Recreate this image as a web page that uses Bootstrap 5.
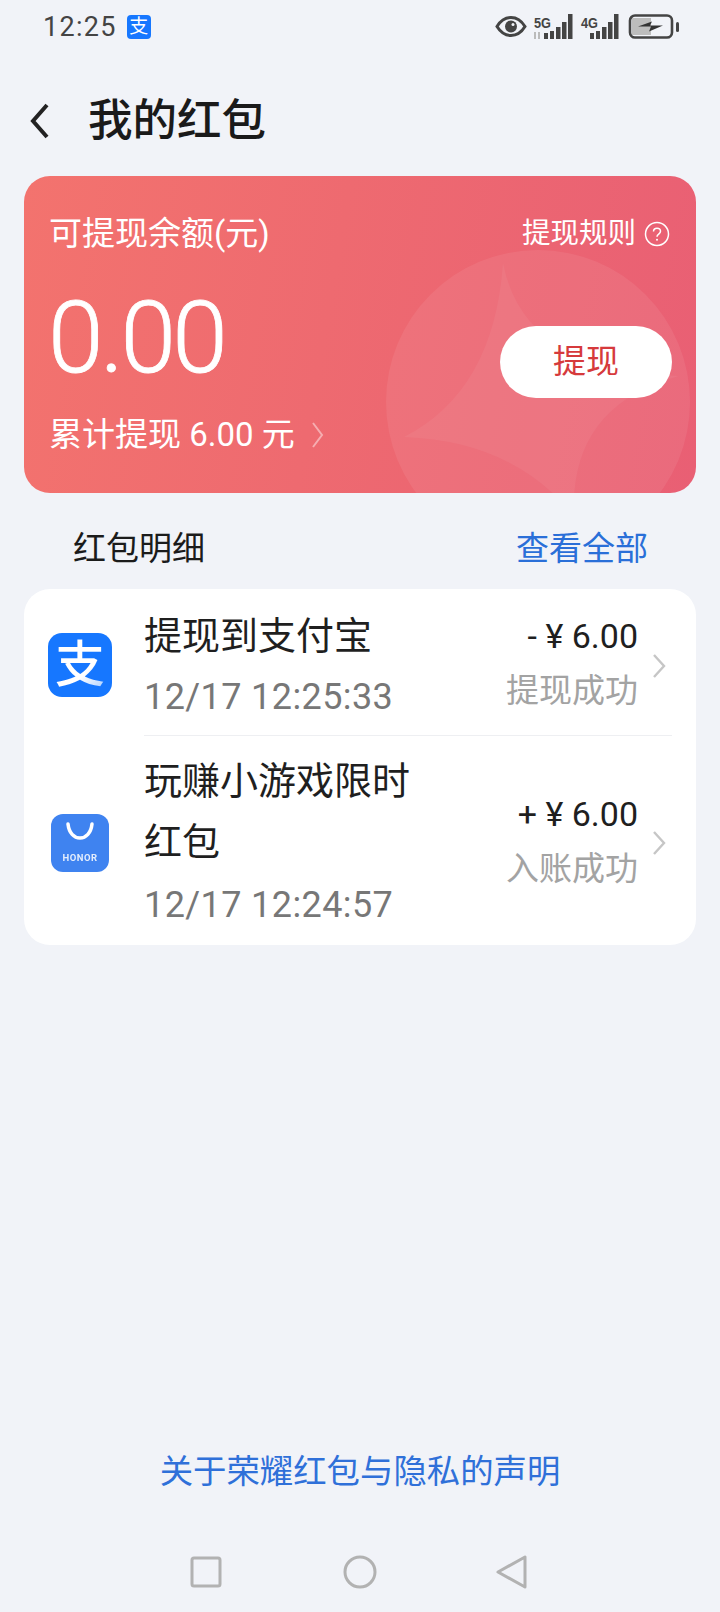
<!doctype html>
<html lang="zh-CN">
  <head>
    <meta charset="utf-8">
    <meta name="viewport" content="width=device-width, initial-scale=1">
    <title>我的红包</title>
    <link href="https://cdn.jsdelivr.net/npm/bootstrap@5.3.3/dist/css/bootstrap.min.css" rel="stylesheet">
    <style>
      html, body { height: 100%; margin: 0; }
      body {
        background: #f1f3f8;
        color: #1b1b1b;
        font-family: Roboto, "Noto Sans CJK SC", sans-serif;
      }
      .screen { width: 720px; height: 1612px; overflow: hidden; }

      .status-bar { height: 54px; padding: 3px 33px 0 43px; }
      .status-time { font-size: 27px; letter-spacing: 1.3px; color: #444; line-height: 54px; margin-top: -3px; }
      .status-app {
        width: 24px; height: 24px; margin-left: 10px; margin-top: -3px; border-radius: 4px;
        background: #1677ff; color: #fff; font-size: 19px; line-height: 24px; text-align: center;
      }

      .title-bar { height: 122px; padding: 12px 0 0 30px; }
      .title-text { font-size: 44.500px; font-weight: 500; margin-left: 38px; line-height: 1; color: #1a1a1a; }

      .balance-box {
        height: 317px; margin: 0 24px; border-radius: 26px; color: #fff;
        background: linear-gradient(100deg, #f3736e 0%, #ee6a70 45%, #e95f74 100%);
        padding: 36px 24px 0 25px;
      }
      .balance-deco { position: absolute; left: 0; top: 0; }
      .balance-top, .balance-mid, .balance-sum { position: relative; }
      .balance-label { font-size: 33px; line-height: 44px; }
      .balance-rule { font-size: 28.500px; line-height: 44px; margin-right: 2px; }
      .balance-num { font-family: Roboto, sans-serif; font-weight: 300; -webkit-text-stroke: .8px #fff; font-size: 100px; line-height: 100px; letter-spacing: -3.500px; margin-left: -1px; }
      .balance-mid { margin-top: 32px; }
      .withdraw-btn {
        width: 172px; height: 72px; margin-top: 38px; background: #fff; border: 0; border-radius: 36px;
        color: #d63a3c; font-size: 33px; line-height: 72px; padding: 0; text-align: center;
      }
      .balance-sum { font-size: 33px; line-height: 44px; margin-top: 15px; }

      .detail-head { height: 96px; padding: 16px 72px 0 73px; font-size: 33px; }
      .see-all { color: #2a6fd8; }

      .record-list { margin: 0 24px; background: #fff; border-radius: 26px; padding: 0 24px; }
      .record-row { margin-left: 96px; position: relative; }
      .record-row + .record-row { border-top: 1px solid #eeeff2; }
      .row-one { height: 146px; padding-top: 17px; }
      .row-two { height: 210px; padding-top: 15px; }
      .record-icon { position: absolute; transform: translateY(-50%); }
      .icon-alipay {
        top: calc(50% + 3px); left: -96px; width: 64px; height: 64px; border-radius: 14px; background: #1677ff;
        font-size: 50px; font-weight: 500; line-height: 64px; text-align: center;
      }
      .alipay-char {
        background: linear-gradient(135deg, #fff 62%, #b5d4ff 90%);
        -webkit-background-clip: text; background-clip: text; color: transparent;
      }
      .icon-honor { top: calc(50% + 2px); left: -93px; width: 58px; height: 58px; border-radius: 12px; background: #3f83f0; color: #fff; text-align: center; }
      .honor-word { font-family: Roboto, sans-serif; font-weight: 700; font-size: 9.500px; letter-spacing: .5px; line-height: 10px; display: block; margin-top: 11px; opacity: .85; }
      .record-name { width: 280px; font-size: 38px; line-height: 61px; color: #1f1f1f; }
      .record-time { font-size: 36px; line-height: 60px; letter-spacing: .4px; color: #777; }
      .row-two .record-time { margin-top: 2px; }
      .record-side { position: absolute; right: 34px; text-align: right; }
      .side-money { font-size: 34px; line-height: 44px; color: #1f1f1f; }
      .side-state { font-size: 33px; line-height: 44px; margin-top: 11px; color: #a3a3a3; }
      .record-arrow { position: absolute; right: 6px; }
      .row-one .record-side { top: 25px; }
      .row-one .record-arrow { top: 64px; }
      .row-two .record-side { top: 56px; }
      .row-two .record-arrow { top: 94px; }

      .privacy-link { margin-top: auto; font-size: 33.400px; line-height: 44px; color: #2f70d9; }
      .nav-keys { height: 118px; padding-top: 61px; }
    </style>
  </head>
  <body>
    <div class="screen d-flex flex-column">
      <div class="status-bar d-flex align-items-center justify-content-between">
        <div class="d-flex align-items-center">
          <span class="status-time">12:25</span>
          <span class="status-app">支</span>
        </div>
        <svg width="192" height="30" viewBox="0 0 192 30">
          <path d="M2 12.500c4-6.500 9-9 14-9s10 2.500 14 9c-4 6.500-9 9-14 9s-10-2.500-14-9z" fill="none" stroke="#444" stroke-width="3"/>
          <circle cx="16" cy="12.500" r="6" fill="#444"/>
          <circle cx="18" cy="10.500" r="1.500" fill="#f1f3f8"/>
          <text x="39" y="14" font-family="Liberation Sans" font-weight="700" font-size="15" textLength="17" lengthAdjust="spacingAndGlyphs" fill="#444">5G</text>
          <path d="M40 18v7M44 18v7" stroke="#bbb" stroke-width="2"/>
          <g fill="#444">
            <rect x="49" y="19" width="4" height="6"/><rect x="55" y="17" width="4" height="8"/><rect x="61" y="13" width="4.500" height="12"/><rect x="67" y="8" width="4.500" height="17"/><rect x="73" y="0" width="4.500" height="25"/>
          </g>
          <text x="86" y="14" font-family="Liberation Sans" font-weight="700" font-size="15" textLength="17" lengthAdjust="spacingAndGlyphs" fill="#444">4G</text>
          <g fill="#444">
            <rect x="95" y="19" width="4" height="6"/><rect x="101" y="17" width="4" height="8"/><rect x="107" y="13" width="4.500" height="12"/><rect x="113" y="8" width="4.500" height="17"/><rect x="119" y="0" width="4.500" height="25"/>
          </g>
          <rect x="135" y="1.500" width="42" height="22" rx="5" fill="#f1f3f8" stroke="#444" stroke-width="2.600"/>
          <path d="M137 4h19v17h-19z" fill="#bdbdbd"/>
          <path d="M143 12.500l14-5-2 4h13l-14 6 2-5z" fill="#333"/>
          <rect x="181" y="8" width="3" height="10" rx="1.500" fill="#444"/>
        </svg>
      </div>

      <div class="title-bar d-flex align-items-center">
        <svg width="20" height="36" viewBox="0 0 20 36"><path d="M17 2L3 18l14 16" fill="none" stroke="#222" stroke-width="4"/></svg>
        <span class="title-text">我的红包</span>
      </div>

      <div class="balance-box position-relative overflow-hidden">
        <svg class="balance-deco" width="672" height="317" viewBox="0 0 672 317">
          <circle cx="514" cy="226" r="152" fill="#fff" opacity=".07"/>
          <path d="M479 87Q500 195 655 200Q545 230 550 340Q490 265 380 261Q470 215 479 87z" fill="#fff" opacity=".05"/>
        </svg>
        <div class="balance-top d-flex justify-content-between">
          <span class="balance-label">可提现余额(元)</span>
          <span class="balance-rule d-flex align-items-center gap-2">提现规则
            <svg width="26" height="26" viewBox="0 0 26 26">
              <circle cx="13" cy="13" r="11.500" fill="none" stroke="#fff" stroke-width="1.500"/>
              <path d="M9.500 10.500c0-2 1.500-3.300 3.500-3.300s3.500 1.300 3.500 3.100c0 2.800-3.500 2.700-3.500 5.400" fill="none" stroke="#fff" stroke-width="1.500"/>
              <circle cx="13" cy="18.800" r="1" fill="#fff"/>
            </svg>
          </span>
        </div>
        <div class="balance-mid d-flex justify-content-between align-items-start">
          <span class="balance-num">0.00</span>
          <button type="button" class="btn withdraw-btn">提现</button>
        </div>
        <div class="balance-sum d-flex align-items-center">累计提现 6.00 元
          <svg class="ms-3" width="13" height="28" viewBox="0 0 13 28"><path d="M2 2l9 12-9 12" fill="none" stroke="#fff" stroke-opacity=".45" stroke-width="2"/></svg>
        </div>
      </div>

      <div class="detail-head d-flex align-items-center justify-content-between">
        <span>红包明细</span>
        <span class="see-all">查看全部</span>
      </div>

      <div class="record-list">
        <div class="record-row row-one">
          <div class="record-icon icon-alipay"><span class="alipay-char">支</span></div>
          <div class="record-name">提现到支付宝</div>
          <div class="record-time">12/17 12:25:33</div>
          <div class="record-side">
            <div class="side-money">- ¥ 6.00</div>
            <div class="side-state">提现成功</div>
          </div>
          <svg class="record-arrow" width="14" height="26" viewBox="0 0 14 26"><path d="M2 2l10 11L2 24" fill="none" stroke="#c6c6c6" stroke-width="2.400"/></svg>
        </div>
        <div class="record-row row-two">
          <div class="record-icon icon-honor">
            <svg class="d-block mx-auto mt-2" width="32" height="20" viewBox="0 0 32 20"><path d="M4 2c1 9 6 14 12 14s11-5 12-14" fill="none" stroke="#fff" stroke-width="3.500" stroke-linecap="round"/></svg>
            <span class="honor-word">HONOR</span>
          </div>
          <div class="record-name">玩赚小游戏限时红包</div>
          <div class="record-time">12/17 12:24:57</div>
          <div class="record-side">
            <div class="side-money">+ ¥ 6.00</div>
            <div class="side-state">入账成功</div>
          </div>
          <svg class="record-arrow" width="14" height="26" viewBox="0 0 14 26"><path d="M2 2l10 11L2 24" fill="none" stroke="#c6c6c6" stroke-width="2.400"/></svg>
        </div>
      </div>

      <div class="privacy-link text-center">关于荣耀红包与隐私的声明</div>

      <div class="nav-keys d-flex justify-content-center align-items-start">
        <svg width="340" height="34" viewBox="0 0 340 34">
          <rect x="2" y="3" width="28" height="28" rx="2" fill="none" stroke="#b2b2b2" stroke-width="3"/>
          <circle cx="170" cy="17" r="15" fill="none" stroke="#b2b2b2" stroke-width="3"/>
          <path d="M335 2v30L308 17z" fill="none" stroke="#b2b2b2" stroke-width="3" stroke-linejoin="round"/>
        </svg>
      </div>
    </div>
    <script src="https://cdn.jsdelivr.net/npm/bootstrap@5.3.3/dist/js/bootstrap.bundle.min.js"></script>
  </body>
</html>
